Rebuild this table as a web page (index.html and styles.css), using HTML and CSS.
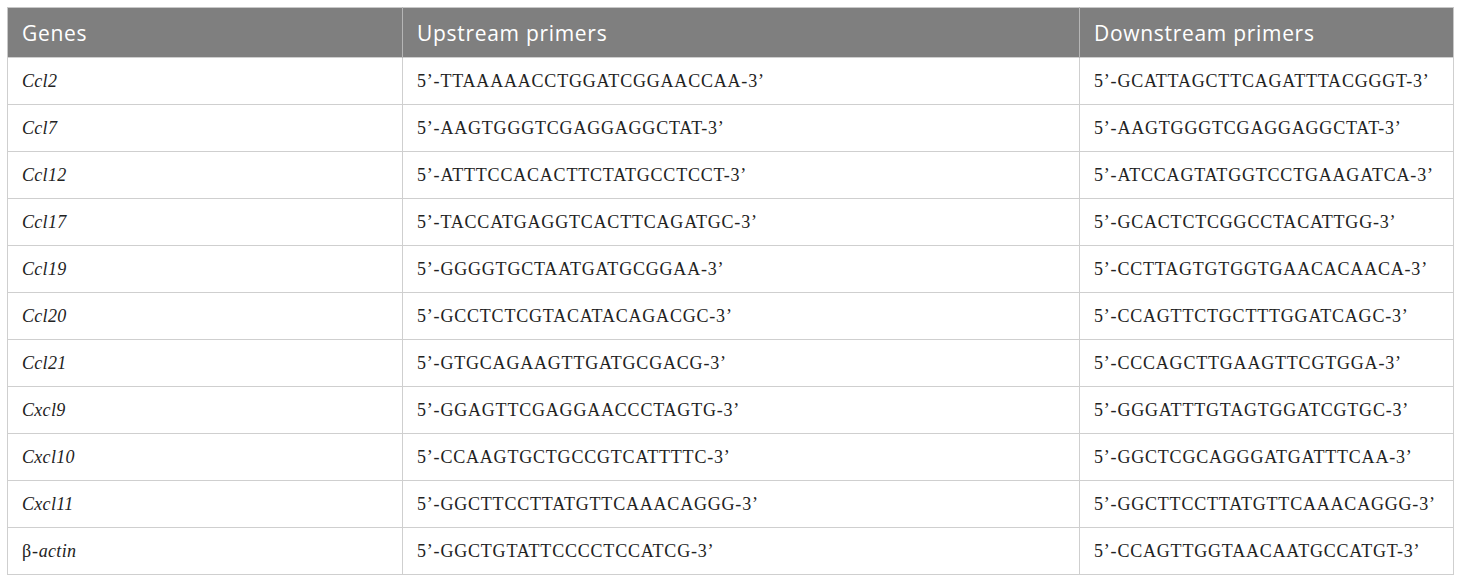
FILE: index.html
```html
<!DOCTYPE html>
<html>
<head>
<meta charset="utf-8">
<link rel="stylesheet" href="styles.css">
</head>
<body>
<table class="primers">
  <colgroup>
    <col class="c1"><col class="c2"><col class="c3">
  </colgroup>
  <thead>
    <tr><th>Genes</th><th>Upstream primers</th><th>Downstream primers</th></tr>
  </thead>
  <tbody>
    <tr><td><i>Ccl2</i></td><td>5’-TTAAAAACCTGGATCGGAACCAA-3’</td><td>5’-GCATTAGCTTCAGATTTACGGGT-3’</td></tr>
    <tr><td><i>Ccl7</i></td><td>5’-AAGTGGGTCGAGGAGGCTAT-3’</td><td>5’-AAGTGGGTCGAGGAGGCTAT-3’</td></tr>
    <tr><td><i>Ccl12</i></td><td>5’-ATTTCCACACTTCTATGCCTCCT-3’</td><td>5’-ATCCAGTATGGTCCTGAAGATCA-3’</td></tr>
    <tr><td><i>Ccl17</i></td><td>5’-TACCATGAGGTCACTTCAGATGC-3’</td><td>5’-GCACTCTCGGCCTACATTGG-3’</td></tr>
    <tr><td><i>Ccl19</i></td><td>5’-GGGGTGCTAATGATGCGGAA-3’</td><td>5’-CCTTAGTGTGGTGAACACAACA-3’</td></tr>
    <tr><td><i>Ccl20</i></td><td>5’-GCCTCTCGTACATACAGACGC-3’</td><td>5’-CCAGTTCTGCTTTGGATCAGC-3’</td></tr>
    <tr><td><i>Ccl21</i></td><td>5’-GTGCAGAAGTTGATGCGACG-3’</td><td>5’-CCCAGCTTGAAGTTCGTGGA-3’</td></tr>
    <tr><td><i>Cxcl9</i></td><td>5’-GGAGTTCGAGGAACCCTAGTG-3’</td><td>5’-GGGATTTGTAGTGGATCGTGC-3’</td></tr>
    <tr><td><i>Cxcl10</i></td><td>5’-CCAAGTGCTGCCGTCATTTTC-3’</td><td>5’-GGCTCGCAGGGATGATTTCAA-3’</td></tr>
    <tr><td><i>Cxcl11</i></td><td>5’-GGCTTCCTTATGTTCAAACAGGG-3’</td><td>5’-GGCTTCCTTATGTTCAAACAGGG-3’</td></tr>
    <tr><td>β-<i>actin</i></td><td>5’-GGCTGTATTCCCCTCCATCG-3’</td><td>5’-CCAGTTGGTAACAATGCCATGT-3’</td></tr>
  </tbody>
</table>
</body>
</html>
```
FILE: styles.css
```css
html, body {
  margin: 0;
  padding: 0;
  background: #ffffff;
}
body {
  padding: 7px 7px 0 7px;
}
.primers {
  border-collapse: collapse;
  width: 1446px;
  table-layout: fixed;
  border: 1px solid #c8c8c8;
}
.c1 { width: 395px; }
.c2 { width: 677px; }
.c3 { width: 374px; }
.primers th {
  background: #7f7f7f;
  color: #ffffff;
  font-family: "Open Sans", "Liberation Sans", sans-serif;
  font-weight: 400;
  font-size: 21px;
  letter-spacing: 0.7px;
  text-align: left;
  height: 50px;
  padding: 0 0 0 14px;
  border-left: 1px solid #b5b5b5;
  box-sizing: border-box;
}
.primers th:first-child { border-left: none; }
.primers td {
  font-family: "Liberation Serif", "DejaVu Serif", serif;
  font-size: 18px;
  letter-spacing: 0.8px;
  color: #222222;
  height: 47px;
  padding: 0 0 0 14px;
  border: 1px solid #cfcfcf;
  box-sizing: border-box;
}
.primers td i { font-style: italic; letter-spacing: 0.3px; }
```
